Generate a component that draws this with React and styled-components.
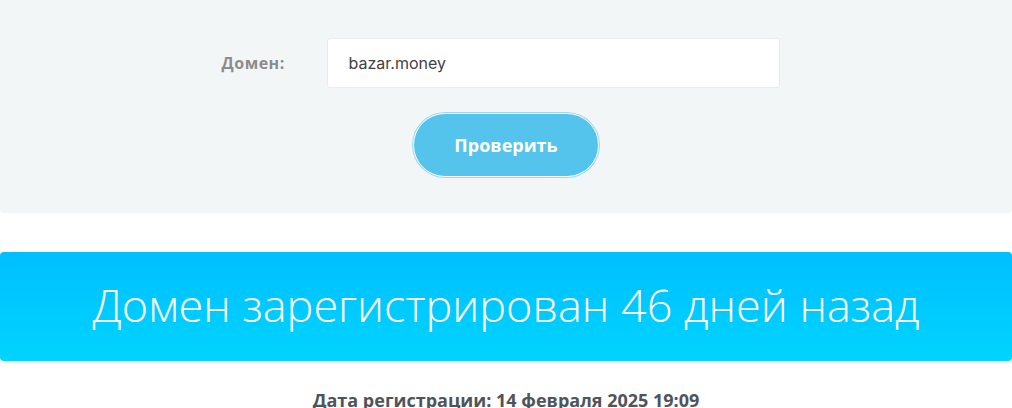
import React from "react";
import styled, { createGlobalStyle } from "styled-components";

const Global = createGlobalStyle`
  html, body { margin: 0; padding: 0; background: #ffffff; }
  body { font-family: "Open Sans", "Liberation Sans", sans-serif; }
  * { box-sizing: border-box; }
`;

const Page = styled.div`
  width: 1012px;
  display: flex;
  flex-direction: column;
`;

const Panel = styled.section`
  background: #f3f6f7;
  border-radius: 0 0 4px 4px;
  height: 213px;
  padding: 38px 0 0;
  display: flex;
  flex-direction: column;
  align-items: center;
  gap: 25px;
`;

const FormRow = styled.div`
  display: flex;
  align-items: center;
  gap: 42px;
  padding-right: 11px;
`;

const Label = styled.label`
  font-family: "Open Sans", sans-serif;
  font-weight: 700;
  font-size: 16px;
  letter-spacing: 0.5px;
  color: #8c8c8c;
  width: 63px;
  white-space: nowrap;
`;

const Input = styled.input`
  width: 453px;
  height: 50px;
  border: 1px solid #e8ecef;
  border-radius: 3px;
  background: #fff;
  padding: 0 21px;
  font-family: "Inter", "Roboto", sans-serif;
  font-size: 16px;
  color: #3f4145;
  outline: none;
`;

const Button = styled.button`
  width: 186px;
  height: 64px;
  border-radius: 32px;
  background: #55c4ec;
  border: 1px solid #ffffff;
  box-shadow: 0 0 0 1px #9ad9f1;
  color: #fff;
  font-family: "Open Sans", sans-serif;
  font-weight: 700;
  font-size: 18px;
  cursor: pointer;
`;

const Banner = styled.div`
  margin-top: 39px;
  height: 109px;
  border-radius: 4px;
  background: linear-gradient(180deg, #00bfff 0%, #00d4ff 100%);
  display: flex;
  align-items: center;
  justify-content: center;
`;

const BannerText = styled.h1`
  margin: 0;
  font-family: "Open Sans", sans-serif;
  font-weight: 300;
  font-size: 45px;
  color: #fff;
  padding-bottom: 4px;
`;

const DateLine = styled.p`
  margin: 27px 0 0;
  text-align: center;
  font-family: "Open Sans", sans-serif;
  font-weight: 700;
  font-size: 18px;
  color: #50545a;
`;

export default function App() {
  return (
    <>
      <Global />
      <Page>
        <Panel>
          <FormRow>
            <Label htmlFor="domain">Домен:</Label>
            <Input id="domain" defaultValue="bazar.money" />
          </FormRow>
          <Button type="button">Проверить</Button>
        </Panel>
        <Banner>
          <BannerText>Домен зарегистрирован 46 дней назад</BannerText>
        </Banner>
        <DateLine>Дата регистрации: 14 февраля 2025 19:09</DateLine>
      </Page>
    </>
  );
}
